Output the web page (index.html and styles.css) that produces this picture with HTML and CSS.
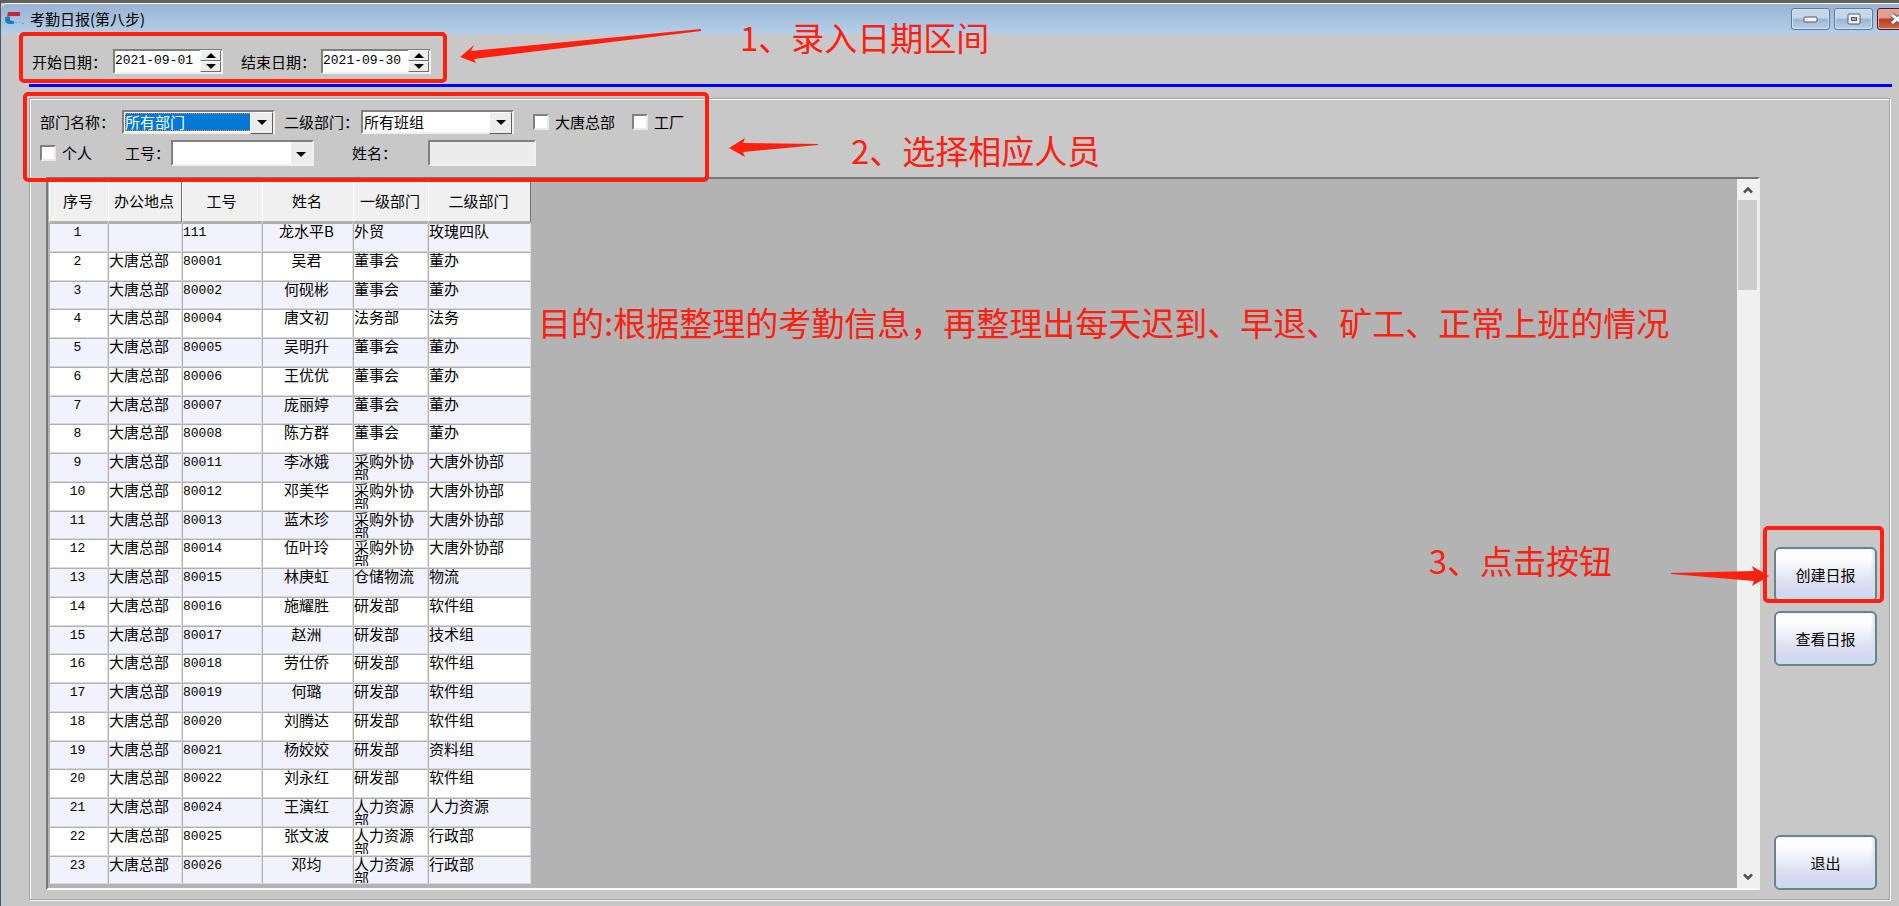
FILE: index.html
```html
<!DOCTYPE html>
<html lang="zh-CN">
<head>
    <meta charset="UTF-8">
    <title>考勤日报(第八步)</title>
    <link rel="stylesheet" href="styles.css">
</head>
<body>
<div class="window">
    <div class="titlebar">
        <svg class="logo" width="20" height="14" viewBox="0 0 20 14">
            <path d="M3 0H15V4H6L2 5Z" fill="#c8283c"/>
            <path d="M0 5H5V8Q6 9 9 9V12H5Q0 12 0 8Z" fill="#1482c8"/>
            <path d="M10 10l2 1M14 11l1-1M17 11l2 1" stroke="#5aa0d2" fill="none"/>
        </svg>
        <h1>考勤日报(第八步)</h1>
        <div class="winbtns">
            <button class="winbtn" type="button" aria-label="最小化">
                <svg width="15" height="8" viewBox="0 0 15 8"><rect x="1" y="2" width="13" height="5" rx="1" fill="#f4f4f4" stroke="#55596a"/></svg>
            </button>
            <button class="winbtn" type="button" aria-label="最大化">
                <svg width="14" height="12" viewBox="0 0 14 12"><rect x="1" y="1" width="12" height="10" rx="1" fill="#f4f4f4" stroke="#55596a"/><rect x="4.500" y="4.500" width="5" height="3" fill="#8fb0d4" stroke="#55596a"/></svg>
            </button>
            <button class="winbtn close" type="button" aria-label="关闭">
                <svg width="14" height="12" viewBox="0 0 14 12"><path d="M2 2L12 10M12 2L2 10" stroke="#55596a" stroke-width="5"/><path d="M2 2L12 10M12 2L2 10" stroke="#f4f4f4" stroke-width="3"/></svg>
            </button>
        </div>
    </div>

    <div class="dates">
        <label for="start">开始日期：</label>
        <div class="spin">
            <input id="start" type="text" value="2021-09-01">
            <div class="arrows">
                <button class="up" type="button" aria-label="增加"></button>
                <button class="down" type="button" aria-label="减少"></button>
            </div>
        </div>
        <label for="end">结束日期：</label>
        <div class="spin">
            <input id="end" type="text" value="2021-09-30">
            <div class="arrows">
                <button class="up" type="button" aria-label="增加"></button>
                <button class="down" type="button" aria-label="减少"></button>
            </div>
        </div>
    </div>

    <div class="line"></div>

    <div class="group">
        <div class="filter">
            <label for="dept">部门名称：</label>
            <div class="combo focus">
                <select id="dept"><option>所有部门</option></select>
            </div>
            <label for="team">二级部门：</label>
            <div class="combo">
                <select id="team"><option>所有班组</option></select>
            </div>
            <label class="check"><input type="checkbox">大唐总部</label>
            <label class="check"><input type="checkbox">工厂</label>
        </div>
        <div class="filter person">
            <label class="check"><input type="checkbox">个人</label>
            <label for="no">工号：</label>
            <div class="combo flat">
                <select id="no"><option></option></select>
            </div>
            <label for="name">姓名：</label>
            <input class="name" id="name" type="text" readonly>
        </div>

        <div class="main">
            <div class="grid">
                <div class="sheet">
                    <table>
                        <colgroup>
                            <col class="c1"><col class="c2"><col class="c3"><col class="c4"><col class="c5"><col class="c6">
                        </colgroup>
                        <thead>
                        <tr><th>序号</th><th class="fixed">办公地点</th><th>工号</th><th>姓名</th><th>一级部门</th><th>二级部门</th></tr>
                        </thead>
                        <tbody>
                        <tr><td>1</td><td></td><td>111</td><td>龙水平B</td><td>外贸</td><td>玫瑰四队</td></tr>
                        <tr><td>2</td><td>大唐总部</td><td>80001</td><td>吴君</td><td>董事会</td><td>董办</td></tr>
                        <tr><td>3</td><td>大唐总部</td><td>80002</td><td>何砚彬</td><td>董事会</td><td>董办</td></tr>
                        <tr><td>4</td><td>大唐总部</td><td>80004</td><td>唐文初</td><td>法务部</td><td>法务</td></tr>
                        <tr><td>5</td><td>大唐总部</td><td>80005</td><td>吴明升</td><td>董事会</td><td>董办</td></tr>
                        <tr><td>6</td><td>大唐总部</td><td>80006</td><td>王优优</td><td>董事会</td><td>董办</td></tr>
                        <tr><td>7</td><td>大唐总部</td><td>80007</td><td>庞丽婷</td><td>董事会</td><td>董办</td></tr>
                        <tr><td>8</td><td>大唐总部</td><td>80008</td><td>陈方群</td><td>董事会</td><td>董办</td></tr>
                        <tr><td>9</td><td>大唐总部</td><td>80011</td><td>李冰娥</td><td><div>采购外协部</div></td><td>大唐外协部</td></tr>
                        <tr><td>10</td><td>大唐总部</td><td>80012</td><td>邓美华</td><td><div>采购外协部</div></td><td>大唐外协部</td></tr>
                        <tr><td>11</td><td>大唐总部</td><td>80013</td><td>蓝木珍</td><td><div>采购外协部</div></td><td>大唐外协部</td></tr>
                        <tr><td>12</td><td>大唐总部</td><td>80014</td><td>伍叶玲</td><td><div>采购外协部</div></td><td>大唐外协部</td></tr>
                        <tr><td>13</td><td>大唐总部</td><td>80015</td><td>林庚虹</td><td>仓储物流</td><td>物流</td></tr>
                        <tr><td>14</td><td>大唐总部</td><td>80016</td><td>施耀胜</td><td>研发部</td><td>软件组</td></tr>
                        <tr><td>15</td><td>大唐总部</td><td>80017</td><td>赵洲</td><td>研发部</td><td>技术组</td></tr>
                        <tr><td>16</td><td>大唐总部</td><td>80018</td><td>劳仕侨</td><td>研发部</td><td>软件组</td></tr>
                        <tr><td>17</td><td>大唐总部</td><td>80019</td><td>何璐</td><td>研发部</td><td>软件组</td></tr>
                        <tr><td>18</td><td>大唐总部</td><td>80020</td><td>刘腾达</td><td>研发部</td><td>软件组</td></tr>
                        <tr><td>19</td><td>大唐总部</td><td>80021</td><td>杨姣姣</td><td>研发部</td><td>资料组</td></tr>
                        <tr><td>20</td><td>大唐总部</td><td>80022</td><td>刘永红</td><td>研发部</td><td>软件组</td></tr>
                        <tr><td>21</td><td>大唐总部</td><td>80024</td><td>王演红</td><td><div>人力资源部</div></td><td>人力资源</td></tr>
                        <tr><td>22</td><td>大唐总部</td><td>80025</td><td>张文波</td><td><div>人力资源部</div></td><td>行政部</td></tr>
                        <tr><td>23</td><td>大唐总部</td><td>80026</td><td>邓均</td><td><div>人力资源部</div></td><td>行政部</td></tr>
                        </tbody>
                    </table>
                </div>
                <div class="scroll">
                    <svg width="10" height="8" viewBox="0 0 10 8"><path d="M1 6.500L5 2.500L9 6.500" fill="none" stroke="#505050" stroke-width="2.500"/></svg>
                    <div class="thumb"></div>
                    <svg width="10" height="8" viewBox="0 0 10 8"><path d="M1 1.500L5 5.500L9 1.500" fill="none" stroke="#505050" stroke-width="2.500"/></svg>
                </div>
            </div>
            <div class="side">
                <button class="btn" type="button">创建日报</button>
                <button class="btn" type="button">查看日报</button>
                <button class="btn exit" type="button">退出</button>
            </div>
        </div>
    </div>

    <!-- 操作说明 -->
    <div class="mark mark1"></div>
    <div class="mark mark2"></div>
    <div class="mark mark3"></div>
    <svg class="arrow arrow1" width="242" height="36" viewBox="0 0 242 36"><path d="M0 29L14 17L11 23L241 1V3L14 31L16 35Z"/></svg>
    <svg class="arrow arrow2" width="90" height="20" viewBox="0 0 90 20"><path d="M0 10L16 0L14 5L89 6V7L14 14L16 19Z"/></svg>
    <svg class="arrow arrow3" width="98" height="20" viewBox="0 0 98 20"><path d="M98 10L81 0L83 5L0 7V8L83 15L81 20Z"/></svg>
    <p class="tip tip1">1、录入日期区间</p>
    <p class="tip tip2">2、选择相应人员</p>
    <p class="tip tip3">3、点击按钮</p>
    <p class="tip goal">目的:根据整理的考勤信息，再整理出每天迟到、早退、矿工、正常上班的情况</p>
</div>
</body>
</html>
```
FILE: styles.css
```css
* {
    padding: 0;
    margin: 0;
    box-sizing: border-box;
}

body {
    background: #c8c8c8;
}

body, input, select, button {
    font-family: "Noto Sans CJK SC", sans-serif;
    font-size: 15px;
    color: #000;
}

button, select, input {
    border: 0;
    border-radius: 0;
    outline: none;
}

.window {
    position: relative;
    display: flex;
    flex-direction: column;
    min-height: 100vh;
    padding-bottom: 6px;
    border-top: 3px solid #60605c;
    border-left: 1px solid #555;
    box-shadow: inset 1px 0 #b4cae4;
    overflow: hidden;
}

/* 标题栏 */
.titlebar {
    display: flex;
    align-items: center;
    height: 31px;
    padding-left: 4px;
    border-top: 1px solid #fff;
    background: linear-gradient(#98b3d1, #b5cfea);
    border-top-left-radius: 6px;
}

.titlebar h1 {
    margin-left: 5px;
    font-size: 15px;
    font-weight: normal;
    line-height: 22px;
}

.winbtns {
    display: flex;
    gap: 4px;
    margin-left: auto;
    margin-right: -17px;
}

.winbtn {
    display: flex;
    align-items: center;
    justify-content: center;
    width: 39px;
    height: 22px;
    border: 1px solid #647890;
    border-radius: 3px;
    background: linear-gradient(#c5d7ea 45%, #9ab4d0 50%, #b8d0ea);
    box-shadow: inset 0 0 0 1px #d0e0f0;
}

.close {
    border-color: #50141e;
    background: linear-gradient(#e0a090 45%, #b83c24 50%, #d06850);
    box-shadow: inset 0 0 0 1px #e8b0a4;
}

/* 日期 */
.dates {
    display: grid;
    grid-template-columns: 81px 128px 80px 130px;
    align-items: center;
    height: 50px;
    padding: 4px 0 0 31px;
}

.spin {
    display: flex;
    align-items: center;
    width: 110px;
    height: 25px;
    border: 2px solid;
    border-color: #808080 #f0f0f0 #f0f0f0 #808080;
    background: #fff;
}

.spin input {
    flex: 1;
    width: 0;
    padding: 0 0 2px 0;
    font-family: "Liberation Mono", monospace;
    font-size: 13px;
}

.arrows {
    display: flex;
    flex-direction: column;
    width: 21px;
}

.arrows button {
    display: flex;
    align-items: center;
    justify-content: center;
    height: 11px;
    border: 1px solid;
    border-color: #fff #707070 #707070 #fff;
    background: #ececec;
}

.arrows button::after {
    content: "";
    border: 5px solid transparent;
}

.arrows .up::after {
    border-top: 0;
    border-bottom-color: #000;
}

.arrows .down::after {
    border-bottom: 0;
    border-top-color: #000;
}

.line {
    height: 3px;
    margin: 0 7px 0 28px;
    background: #0000ff;
}

/* 查询条件 */
.group {
    flex: 1;
    display: flex;
    flex-direction: column;
    margin: 11px 9px 0 28px;
    padding: 11px 0 9px;
    border: 1px solid #a4a4a4;
    box-shadow: inset 1px 1px #fff, 1px 1px #fff;
}

.filter {
    display: grid;
    grid-template-columns: 82px 162px 77px 172px 99px auto;
    align-items: center;
    height: 24px;
    padding-left: 10px;
    line-height: 20px;
}

.filter label {
    padding-bottom: 1px;
}

.person {
    grid-template-columns: 85px 46px 181px 76px 108px;
    height: 26px;
    margin-top: 6px;
}

.check {
    display: flex;
    align-items: center;
    gap: 6px;
}

.check input {
    appearance: none;
    width: 16px;
    height: 16px;
    border: 2px solid;
    border-color: #808080 #e8e8e8 #e8e8e8 #808080;
    background: #fff;
}

.combo {
    position: relative;
    width: 153px;
    height: 24px;
    padding: 1px;
    border: 2px solid;
    border-color: #808080 #f0f0f0 #f0f0f0 #808080;
    background: #fff;
}

.combo select {
    appearance: none;
    display: block;
    width: 126px;
    height: 18px;
    line-height: 18px;
    background: #fff;
}

.combo::before {
    content: "";
    position: absolute;
    top: 0;
    right: 0;
    width: 21px;
    height: 20px;
    border: 1px solid;
    border-color: #fff #606060 #606060 #fff;
    background: #ececec;
}

.combo::after {
    content: "";
    position: absolute;
    top: 8px;
    right: 6px;
    border: 5px solid transparent;
    border-top-color: #000;
    border-bottom: 0;
}

.focus select {
    color: #fff;
    background: #0078d7;
    outline: 1px dotted #f08030;
    outline-offset: -1px;
}

.flat {
    width: 143px;
    height: 26px;
}

.flat select {
    width: 118px;
}

.flat::before {
    height: 22px;
    border: 0;
}

.flat::after {
    top: 10px;
}

.name {
    width: 108px;
    height: 26px;
    border: 2px solid;
    border-color: #808080 #f0f0f0 #f0f0f0 #808080;
    background: #ececec;
}

/* 人员列表 */
.main {
    flex: 1;
    display: flex;
    gap: 14px;
    margin-top: 11px;
    padding: 0 12px 0 16px;
}

.grid {
    flex: 1;
    display: flex;
    border: 2px solid;
    border-color: #787878 #f0f0f0 #f8f8f8 #787878;
    background: #b3b3b3;
}

.sheet {
    flex: 1;
    padding: 2px 0 0 1px;
}

table {
    table-layout: fixed;
    width: 482px;
    border-collapse: separate;
    border-spacing: 0;
}

.c1 { width: 59px; }
.c2 { width: 74px; }
.c3 { width: 80px; }
.c4 { width: 91px; }
.c5 { width: 75px; }
.c6 { width: 103px; }

th {
    height: 42px;
    padding-right: 2px;
    font-weight: normal;
    line-height: 20px;
    white-space: nowrap;
    background: #f0f0f0;
    border-left: 1px solid #fff;
    border-bottom: 2px solid #b0b0b0;
}

th.fixed, th:last-child {
    border-right: 1px solid #707070;
}

td {
    height: 29px;
    line-height: 14px;
    vertical-align: top;
    white-space: nowrap;
    background: #fff;
    border: 1px solid;
    border-color: #b0b0b0 #e0e0e0 #d8d8d8 #b0b0b0;
}

tbody tr:nth-child(odd) td {
    background: #f2f2ff;
}

tbody tr:nth-child(4n+3) td {
    height: 28px;
}

td div {
    height: 26px;
    overflow: hidden;
    white-space: normal;
}

td:nth-child(1), td:nth-child(4) {
    padding-right: 2px;
    text-align: center;
}

td:nth-child(1), td:nth-child(3) {
    font-family: "Liberation Mono", monospace;
    font-size: 13px;
    line-height: 17px;
}

.scroll {
    display: flex;
    flex-direction: column;
    align-items: center;
    width: 21px;
    padding: 7px 1px;
    background: #f0f0f0;
}

.thumb {
    width: 19px;
    height: 90px;
    margin: 6px 0 auto;
    background: #cdcdcd;
}

/* 按钮 */
.side {
    display: flex;
    flex-direction: column;
    gap: 9px;
    width: 103px;
    padding-top: 370px;
}

.btn {
    height: 55px;
    border: 2px solid #6e8088;
    border-radius: 6px;
    background: linear-gradient(#fff 15%, #e8eaf6 50%, #d4d8ee 80%, #c8dcf0);
    box-shadow: inset -2px 0 3px #cfe2ee;
}

.exit {
    margin-top: auto;
}

/* 说明标注 */
.mark {
    position: absolute;
    border: 4px solid #ff2010;
    border-radius: 5px;
    pointer-events: none;
}

.mark1 {
    left: 18px;
    top: 29px;
    width: 428px;
    height: 51px;
}

.mark2 {
    left: 22px;
    top: 89px;
    width: 686px;
    height: 90px;
}

.mark3 {
    right: 15px;
    top: 523px;
    width: 121px;
    height: 77px;
}

.arrow {
    position: absolute;
    fill: #ff2010;
}

.arrow1 {
    left: 459px;
    top: 25px;
}

.arrow2 {
    left: 728px;
    top: 135px;
}

.arrow3 {
    right: 130px;
    top: 563px;
}

.tip {
    position: absolute;
    font-size: 33px;
    line-height: 44px;
    white-space: nowrap;
    color: #ff2010;
}

.tip1 {
    left: 739px;
    top: 12px;
}

.tip2 {
    left: 850px;
    top: 125px;
}

.tip3 {
    right: 287px;
    top: 535px;
}

.goal {
    left: 537px;
    top: 297px;
}
```
